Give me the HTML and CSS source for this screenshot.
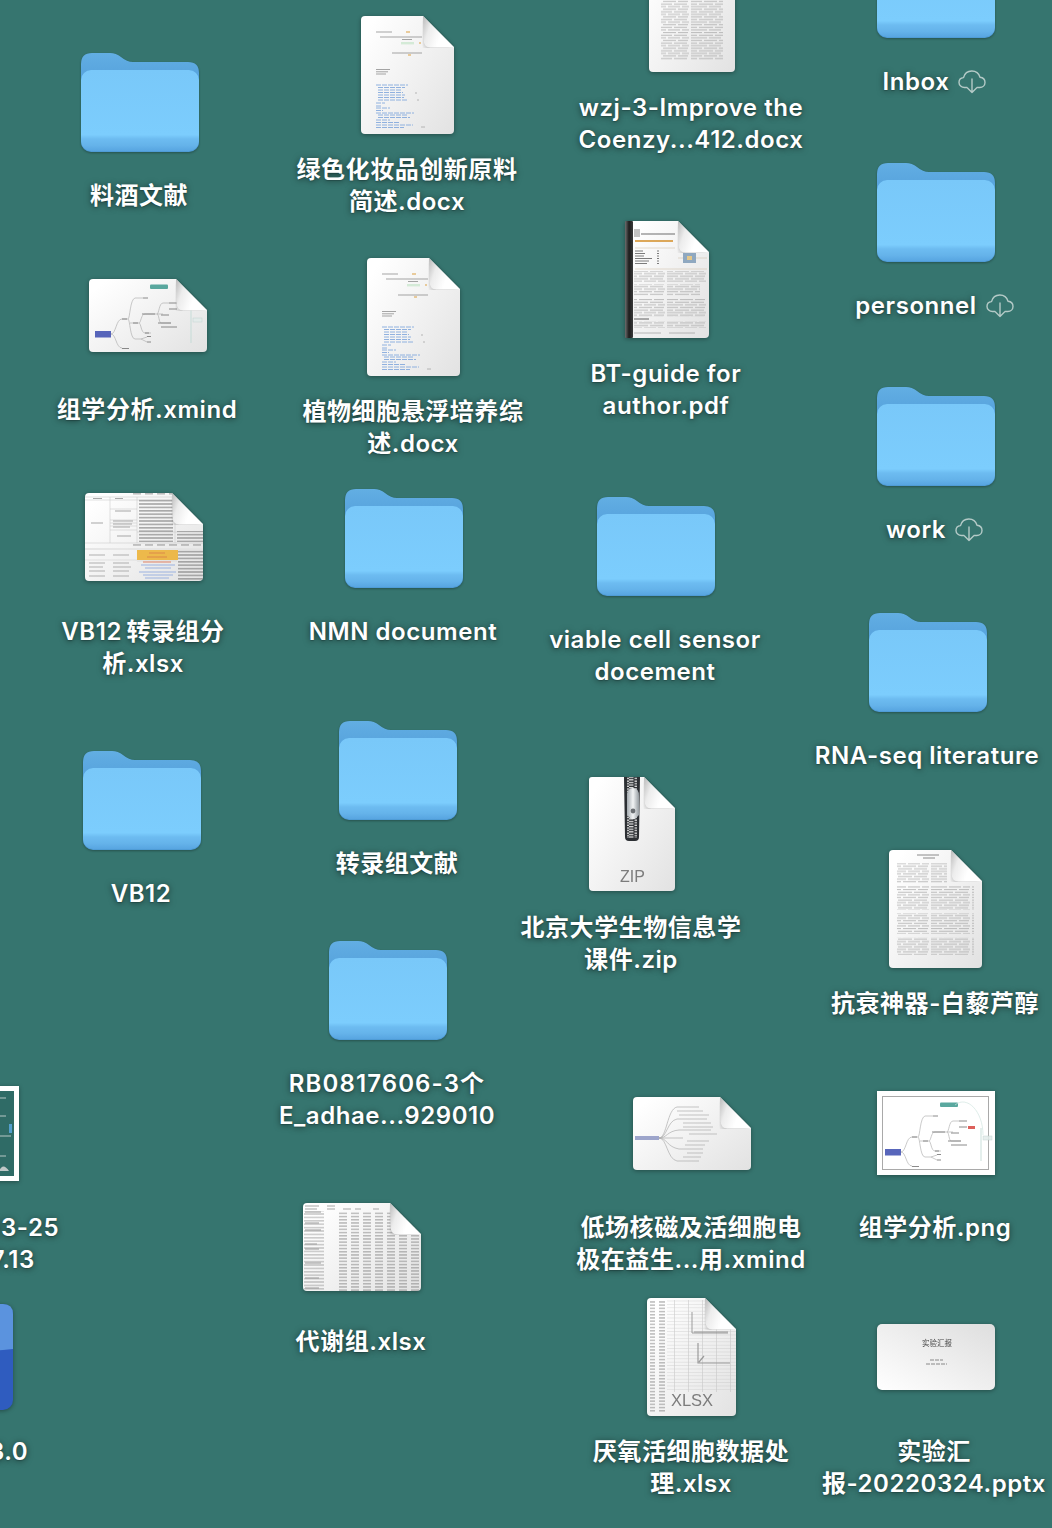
FILE: index.html
```html
<!DOCTYPE html>
<html lang="en">

<head>
    <meta charset="UTF-8">
    <title>Desktop</title>
    <link rel="stylesheet" href="styles.css">
</head>

<body>
    <!-- shared shapes -->
    <svg class="defs" width="0" height="0">
        <defs>
            <linearGradient id="folderBack" x1="0" y1="0" x2="0" y2="1">
                <stop offset="0" stop-color="#62aee3" />
                <stop offset="1" stop-color="#4793d4" />
            </linearGradient>
            <linearGradient id="folderFront" x1="0" y1="0" x2="0" y2="1">
                <stop offset="0" stop-color="#79c8f9" />
                <stop offset="0.8" stop-color="#7ccdfd" />
                <stop offset="0.85" stop-color="#6dbcf1" />
                <stop offset="0.93" stop-color="#65b3ea" />
                <stop offset="1" stop-color="#58a5e1" />
            </linearGradient>
            <linearGradient id="paper" x1="0" y1="0.2" x2="1" y2="1">
                <stop offset="0" stop-color="#ffffff" />
                <stop offset="1" stop-color="#e2e2e2" />
            </linearGradient>
            <linearGradient id="slide" x1="0" y1="1" x2="1" y2="0">
                <stop offset="0" stop-color="#ffffff" />
                <stop offset="1" stop-color="#dedede" />
            </linearGradient>
            <linearGradient id="foldFill" x1="0" y1="0" x2="1" y2="0.35">
                <stop offset="0" stop-color="#b9b9b9" />
                <stop offset="0.3" stop-color="#ececec" />
                <stop offset="0.7" stop-color="#ffffff" />
            </linearGradient>
            <linearGradient id="spine" x1="0" y1="0" x2="1" y2="0">
                <stop offset="0" stop-color="#6d6d6d" />
                <stop offset="0.5" stop-color="#1d1d1d" />
                <stop offset="1" stop-color="#3a3a3a" />
            </linearGradient>
            <linearGradient id="slider" x1="0" y1="0" x2="1" y2="0">
                <stop offset="0" stop-color="#a4abb0" />
                <stop offset="0.5" stop-color="#f2f4f5" />
                <stop offset="1" stop-color="#959ca1" />
            </linearGradient>
            <pattern id="rows" width="41" height="7.8" patternUnits="userSpaceOnUse">
                <path d="M0 0.6H12M14 0.6H27M29 0.6H39M0 3.2H7M9 3.2H23M25 3.2H38M0 5.8H17M19 5.8H31M33 5.8H40" stroke="#a0a0a0" stroke-width="0.8" fill="none" />
            </pattern>
            <pattern id="tableRows" width="118" height="3.4" patternUnits="userSpaceOnUse">
                <rect width="118" height="1.6" fill="#777" opacity="0.7" />
            </pattern>
            <pattern id="cells" width="12" height="3.2" patternUnits="userSpaceOnUse">
                <rect width="8" height="1.5" fill="#777" opacity="0.55" />
            </pattern>
            <pattern id="sheet" width="14" height="3.4" patternUnits="userSpaceOnUse">
                <path d="M0 3.2H14M13.5 0V3.4" stroke="#bcbcbc" stroke-width="0.5" fill="none" />
            </pattern>
            <pattern id="teeth" width="10" height="2.6" patternUnits="userSpaceOnUse">
                <rect width="4.5" height="1.3" fill="#dcdcdc" />
                <rect x="5.5" y="1.3" width="4.5" height="1.3" fill="#dcdcdc" />
            </pattern>
            <clipPath id="clipTable">
                <path d="M4 0H87L118 31V84a4 4 0 0 1-4 4H4a4 4 0 0 1-4-4V4a4 4 0 0 1 4-4Z" />
            </clipPath>
            <clipPath id="clipSheet">
                <path d="M4 0H58L89 31V114a4 4 0 0 1-4 4H4a4 4 0 0 1-4-4V4a4 4 0 0 1 4-4Z" />
            </clipPath>

            <symbol id="folder" viewBox="0 0 118 99">
                <path fill="url(#folderBack)" d="M0 11Q0 0 11 0H29Q35 0 40 4Q46 9 52 9H107Q118 9 118 20V60H0Z" />
                <rect y="17" width="118" height="82" rx="10" fill="#4f9cd6" />
                <rect y="17" width="118" height="81" rx="10" fill="url(#folderFront)" />
            </symbol>

            <symbol id="fold" viewBox="0 0 32 32">
                <path class="fold-shape" fill="url(#foldFill)" d="M0.5 0L31.5 31.5H8Q1.5 31.5 1 24Z" />
            </symbol>

            <symbol id="mindmap" viewBox="0 0 118 73">
                <g fill="none" stroke="#a6a6a6" stroke-width="0.7">
                    <path d="M22 55C27 55 27 40 33 40H39C41 40 41 20 46 19H54M22 55C27 55 27 69 33 69M39 40C41 40 41 60 46 60H52" />
                    <path d="M41 44H50C52 44 52 35 56 35H68C70 35 70 24 74 24H80M50 44C52 44 52 54 56 54H62M68 35H74M68 35C70 35 70 44 72 44H82M52 60L58 58M52 60L58 63" />
                </g>
                <g fill="none" stroke="#777" stroke-width="1">
                    <path d="M54 19H59M33 40H38M33 69.5H40M44 44H49M53 35H66M69 44H82M72 48H88M56 54H60M58 57.5H62M58 63H62M72 36H80M80 24H88M80 30H88" />
                </g>
                <path d="M102 31V64" stroke="#bfd9d4" stroke-width="1" />
                <rect x="61" y="5.5" width="18" height="4.5" rx="1" fill="#3e9a8f" />
                <rect x="6" y="52" width="16" height="6.5" fill="#3c4cb0" />
                <rect x="104" y="39" width="9" height="4" fill="#e2ecea" stroke="#bcd0cc" stroke-width="0.5" />
            </symbol>

            <symbol id="reportText" viewBox="0 0 93 118">
                <g fill="none" stroke="#7d7d7d" stroke-width="1" opacity="0.8">
                    <path d="M15 16H31M19 21H61M41 23.5H51M31 37H61M15 53.5H29M15 55.8H27M15 58H25" />
                </g>
                <g fill="none" stroke="#e2b469" stroke-width="1.4">
                    <path d="M45 16H49M58 27H60M47 39H50" />
                </g>
                <rect x="40" y="26" width="13" height="2.4" fill="#cfe9d2" />
                <g fill="none" stroke="#7fa6dc" stroke-width="1" stroke-dasharray="5 1">
                    <path d="M15 69H47M17 71.5H44M17 74H41M17 76.5H42M17 79H44M17 81.5H43M17 84H46M15 87H24M15 90H21M15 92H29M15 94.5H22M15 97H53M17 99H46M17 101.5H49M15 104H29M15 106.5H39M15 109H52M15 111.5H43" />
                </g>
                <path d="M54 77H56M56 84H58M60 111H64" stroke="#aaa" stroke-width="1" />
            </symbol>
        </defs>
    </svg>

    <div class="desktop">

        <!-- left column -->
        <div class="item at-liaojiu">
            <div class="icon-box"><svg class="folder"><use href="#folder" /></svg></div>
            <div class="label">料酒文献</div>
        </div>

        <div class="item at-xmind">
            <div class="icon-box">
                <svg class="icon" width="118" height="73" viewBox="0 0 118 73">
                    <path fill="url(#paper)" d="M4 0H87L118 31V69a4 4 0 0 1-4 4H4a4 4 0 0 1-4-4V4a4 4 0 0 1 4-4Z" />
                    <use class="thumb" href="#mindmap" width="118" height="73" />
                    <use href="#fold" x="86.5" width="32" height="32" />
                </svg>
            </div>
            <div class="label">组学分析.xmind</div>
        </div>

        <div class="item at-vb12x">
            <div class="icon-box">
                <svg class="icon" width="118" height="88" viewBox="0 0 118 88">
                    <g clip-path="url(#clipTable)">
                        <path fill="url(#paper)" d="M0 0H118V88H0Z" />
                        <g class="thumb">
                            <rect x="45" y="0" width="48" height="3" fill="url(#cells)" />
                            <path d="M0 4H93M25 4V50M52 4V50M90 4V50M0 50H118M0 7H90M25 16H52M25 27H52M25 30H52M25 33H52M25 37H52M52 39H118" stroke="#c4c4c4" stroke-width="0.6" fill="none" />
                            <rect x="54" y="6" width="34" height="43" fill="url(#tableRows)" />
                            <rect x="92" y="38" width="26" height="11" fill="url(#tableRows)" />
                            <path d="M30 18H46M28 28H48M28 31H47M28 34H45M32 43H46M6 30H18M8 5.5H17M30 5.5H38" stroke="#999" stroke-width="1" />
                            <rect x="45" y="51" width="73" height="3" fill="url(#cells)" />
                            <rect y="55" width="118" height="2" fill="#e3e3e3" />
                            <rect x="52" y="57" width="41" height="10" fill="#edb02e" />
                            <path d="M64 60H80M62 64H82" stroke="#d9762d" stroke-width="1" />
                            <rect x="93" y="56" width="25" height="32" fill="url(#tableRows)" />
                            <path d="M52 68H92M0 67H52" stroke="#ccc" stroke-width="0.6" />
                            <path d="M4 62H20M28 62H44M4 70H20M28 70H44M4 74H18M28 74H46M4 78H20M28 78H44M4 83H20M28 83H44" stroke="#a5a5a5" stroke-width="1" />
                            <path d="M58 69H86" stroke="#e0714f" stroke-width="1" />
                            <path d="M56 72H90M60 75H86M54 79H91M58 82H88M60 85H84" stroke="#8ea9df" stroke-width="1" />
                        </g>
                    </g>
                    <use href="#fold" x="86.5" width="32" height="32" />
                </svg>
            </div>
            <div class="label">VB12&#8201;转录组分<br>析.xlsx</div>
        </div>

        <div class="item at-vb12">
            <div class="icon-box"><svg class="folder"><use href="#folder" /></svg></div>
            <div class="label">VB12</div>
        </div>

        <!-- cut off by the left edge -->
        <div class="item at-shot">
            <div class="icon-box">
                <svg class="icon" width="116" height="95" viewBox="0 0 116 95">
                    <rect width="116" height="95" fill="#fff" />
                    <rect x="5" y="5" width="106" height="85" fill="#2f6b66" />
                    <path class="thumb" d="M96 12H103M96 30H103M94 50H108M96 70H103" stroke="#cfd8d6" stroke-width="1" />
                    <rect class="thumb" x="106" y="38" width="3" height="9" fill="#5aa9e0" />
                    <path class="thumb" d="M96 85Q100 76 106 85Z" fill="#d8d8d8" />
                </svg>
            </div>
            <div class="label">截屏2022-03-25<br>上午 10.07.13</div>
        </div>

        <div class="item at-app">
            <div class="icon-box">
                <svg class="icon" width="102" height="106" viewBox="0 0 102 106">
                    <rect width="102" height="106" rx="10" fill="#2f5cbf" />
                    <path d="M0 10Q0 0 10 0H92Q102 0 102 10V45Q50 50 0 48Z" fill="#5b93de" />
                </svg>
            </div>
            <div class="label">Setup_v3.0</div>
        </div>

        <!-- second column -->
        <div class="item at-green">
            <div class="icon-box">
                <svg class="icon icon-odd" width="93" height="118" viewBox="0 0 93 118">
                    <path fill="url(#paper)" d="M4 0H62L93 31V114a4 4 0 0 1-4 4H4a4 4 0 0 1-4-4V4a4 4 0 0 1 4-4Z" />
                    <use class="thumb" href="#reportText" width="93" height="118" />
                    <use href="#fold" x="61.5" width="32" height="32" />
                </svg>
            </div>
            <div class="label">绿色化妆品创新原料<br>简述.docx</div>
        </div>

        <div class="item at-plant">
            <div class="icon-box">
                <svg class="icon icon-odd" width="93" height="118" viewBox="0 0 93 118">
                    <path fill="url(#paper)" d="M4 0H62L93 31V114a4 4 0 0 1-4 4H4a4 4 0 0 1-4-4V4a4 4 0 0 1 4-4Z" />
                    <use class="thumb" href="#reportText" width="93" height="118" />
                    <use href="#fold" x="61.5" width="32" height="32" />
                </svg>
            </div>
            <div class="label">植物细胞悬浮培养综<br>述.docx</div>
        </div>

        <div class="item at-nmn">
            <div class="icon-box"><svg class="folder"><use href="#folder" /></svg></div>
            <div class="label">NMN document</div>
        </div>

        <div class="item at-zhuanlu">
            <div class="icon-box"><svg class="folder"><use href="#folder" /></svg></div>
            <div class="label">转录组文献</div>
        </div>

        <div class="item at-rb">
            <div class="icon-box"><svg class="folder"><use href="#folder" /></svg></div>
            <div class="label"><span class="digits-wide">RB0817606-3个</span><br>E_adhae...929010</div>
        </div>

        <div class="item at-metab">
            <div class="icon-box">
                <svg class="icon" width="118" height="88" viewBox="0 0 118 88">
                    <g clip-path="url(#clipTable)">
                        <path fill="url(#paper)" d="M0 0H118V88H0Z" />
                        <g class="thumb">
                            <path d="M2 3H16M24 3H32M2 6H14M24 6H32M40 6H48M52 6H58M70 6H76" stroke="#999" stroke-width="1" />
                            <rect x="1" y="8" width="20" height="80" fill="url(#tableRows)" opacity="0.6" />
                            <rect x="36" y="8" width="82" height="80" fill="url(#cells)" />
                            <path d="M2 9H18M2 20H16M2 27H18M2 41H14M2 46H16M2 60H18M2 75H16M2 85H16" stroke="#8a8a8a" stroke-width="1" />
                        </g>
                    </g>
                    <use href="#fold" x="86.5" width="32" height="32" />
                </svg>
            </div>
            <div class="label">代谢组.xlsx</div>
        </div>

        <!-- third column -->
        <div class="item at-wzj">
            <div class="icon-box">
                <svg class="icon" width="86" height="118" viewBox="0 0 86 118">
                    <path fill="url(#paper)" d="M4 0H55L86 31V114a4 4 0 0 1-4 4H4a4 4 0 0 1-4-4V4a4 4 0 0 1 4-4Z" />
                    <rect class="thumb" x="12" y="34" width="62" height="72" fill="url(#rows)" />
                    <use href="#fold" x="54.5" width="32" height="32" />
                </svg>
            </div>
            <div class="label">wzj-3-Improve the<br>Coenzy...412.docx</div>
        </div>

        <div class="item at-bt">
            <div class="icon-box">
                <svg class="icon" width="84" height="117" viewBox="0 0 84 117">
                    <path fill="url(#paper)" d="M4 0H53L84 31V113a4 4 0 0 1-4 4H4a4 4 0 0 1-4-4V4a4 4 0 0 1 4-4Z" />
                    <rect width="8" height="117" rx="1" fill="url(#spine)" />
                    <g class="thumb">
                        <rect x="9" y="8" width="6" height="8" fill="#b9b9b9" />
                        <path d="M16 13H50" stroke="#555" stroke-width="1.2" />
                        <path d="M10 20H48" stroke="#d89a3e" stroke-width="2" />
                        <path d="M10 27H50M53 37H82M10 48H82" stroke="#c9b9a2" stroke-width="0.6" />
                        <path d="M10 30H18M10 32.5H20M10 35H19M10 37.5H27M10 40H24M10 42.5H22M32 30H34M32 32.5H34M32 35H34M32 37.5H34M32 40H34M32 42.5H34" stroke="#555" stroke-width="0.9" />
                        <rect x="58" y="32" width="13" height="10" fill="#7f9cb8" />
                        <rect x="62" y="35" width="5" height="4" fill="#e2c179" />
                        <rect x="9" y="50" width="73" height="11" fill="url(#rows)" />
                        <rect x="9" y="63" width="66" height="12" fill="url(#rows)" />
                        <rect x="9" y="77" width="73" height="19" fill="url(#rows)" />
                        <path d="M9 98H24" stroke="#444" stroke-width="1" />
                        <rect x="9" y="100" width="73" height="7" fill="url(#rows)" />
                        <path d="M9 112H36M44 112H70" stroke="#9a9a9a" stroke-width="0.8" />
                    </g>
                    <use href="#fold" x="52.5" width="32" height="32" />
                </svg>
            </div>
            <div class="label">BT-guide for<br>author.pdf</div>
        </div>

        <div class="item at-viable">
            <div class="icon-box"><svg class="folder"><use href="#folder" /></svg></div>
            <div class="label">viable cell sensor<br>docement</div>
        </div>

        <div class="item at-zip">
            <div class="icon-box">
                <svg class="icon" width="86" height="118" viewBox="0 0 86 118">
                    <path fill="url(#paper)" d="M3 3H55L86 34V113a4 4 0 0 1-4 4H4a4 4 0 0 1-4-4V6a3 3 0 0 1 3-3Z" />
                    <path d="M35 3H51L50 63a4 4 0 0 1-4 4H40a4 4 0 0 1-4-4Z" fill="#2c2f33" />
                    <rect x="38" y="3" width="10" height="61" fill="url(#teeth)" />
                    <path d="M38 22Q38 14 44 14Q50 14 50 22V41L46 45H42L38 41Z" fill="url(#slider)" />
                    <circle cx="44" cy="37" r="2.4" fill="#6a6e72" />
                    <use href="#fold" x="54.5" y="3" width="32" height="32" />
                    <text class="type-tag" x="43.5" y="108" font-size="16">ZIP</text>
                </svg>
            </div>
            <div class="label">北京大学生物信息学<br>课件.zip</div>
        </div>

        <div class="item at-lowfield">
            <div class="icon-box">
                <svg class="icon" width="118" height="73" viewBox="0 0 118 73">
                    <path fill="url(#paper)" d="M4 0H87L118 31V69a4 4 0 0 1-4 4H4a4 4 0 0 1-4-4V4a4 4 0 0 1 4-4Z" />
                    <g class="thumb">
                        <rect x="2" y="39" width="24" height="4" fill="#8e97c4" />
                        <g fill="none" stroke="#a2a2a2" stroke-width="0.7">
                            <path d="M26 41C34 41 34 12 44 10H66M26 41C34 41 34 24 44 22H74M26 41C34 41 34 34 46 33H78M26 41H50M26 41C34 41 34 50 46 52H70M26 41C34 41 34 62 44 64H66" />
                            <path d="M44 14H70M46 18H76M50 26H78M50 30H80M56 37H84M54 44H76M52 48H72M54 56H70M50 60H68" />
                        </g>
                    </g>
                    <use href="#fold" x="86.5" width="32" height="32" />
                </svg>
            </div>
            <div class="label">低场核磁及活细胞电<br>极在益生...用.xmind</div>
        </div>

        <div class="item at-anaer">
            <div class="icon-box">
                <svg class="icon icon-odd" width="89" height="118" viewBox="0 0 89 118">
                    <g clip-path="url(#clipSheet)">
                        <path fill="url(#paper)" d="M0 0H89V118H0Z" />
                        <g class="thumb">
                            <rect x="20" y="2" width="69" height="92" fill="url(#sheet)" />
                            <rect x="3" y="2" width="15" height="113" fill="url(#cells)" />
                        </g>
                    </g>
                    <path class="thumb" d="M45 14V35H81M47 34H81" stroke="#8d8d8d" stroke-width="1" fill="none" />
                    <path class="thumb" d="M51 45V65H83M52 64L57 58" stroke="#8d8d8d" stroke-width="1.2" fill="none" />
                    <use href="#fold" x="57.5" width="32" height="32" />
                    <text class="type-tag" x="45" y="108" font-size="16.5">XLSX</text>
                </svg>
            </div>
            <div class="label">厌氧活细胞数据处<br>理.xlsx</div>
        </div>

        <!-- right column -->
        <div class="item at-inbox">
            <div class="icon-box"><svg class="folder"><use href="#folder" /></svg></div>
            <div class="label label-cloud">Inbox
                <svg class="cloud" width="28" height="24" viewBox="0 0 28 24"><path d="M9 17.5H6.5C3.5 17.5 1 15.3 1 12.5C1 9.8 3 7.8 5.5 7.6C6.5 3.8 9.7 1 13.8 1C17.8 1 21 3.7 22 7.3C24.9 7.6 27 9.8 27 12.6C27 15.4 24.7 17.5 21.8 17.5H19M14 9V22.5M9.5 18L14 22.5L18.5 18" /></svg>
            </div>
        </div>

        <div class="item at-personnel">
            <div class="icon-box"><svg class="folder"><use href="#folder" /></svg></div>
            <div class="label label-cloud">personnel
                <svg class="cloud" width="28" height="24" viewBox="0 0 28 24"><path d="M9 17.5H6.5C3.5 17.5 1 15.3 1 12.5C1 9.8 3 7.8 5.5 7.6C6.5 3.8 9.7 1 13.8 1C17.8 1 21 3.7 22 7.3C24.9 7.6 27 9.8 27 12.6C27 15.4 24.7 17.5 21.8 17.5H19M14 9V22.5M9.5 18L14 22.5L18.5 18" /></svg>
            </div>
        </div>

        <div class="item at-work">
            <div class="icon-box"><svg class="folder"><use href="#folder" /></svg></div>
            <div class="label label-cloud">work
                <svg class="cloud" width="28" height="24" viewBox="0 0 28 24"><path d="M9 17.5H6.5C3.5 17.5 1 15.3 1 12.5C1 9.8 3 7.8 5.5 7.6C6.5 3.8 9.7 1 13.8 1C17.8 1 21 3.7 22 7.3C24.9 7.6 27 9.8 27 12.6C27 15.4 24.7 17.5 21.8 17.5H19M14 9V22.5M9.5 18L14 22.5L18.5 18" /></svg>
            </div>
        </div>

        <div class="item at-rna">
            <div class="icon-box"><svg class="folder"><use href="#folder" /></svg></div>
            <div class="label">RNA-seq literature</div>
        </div>

        <div class="item at-kangshuai">
            <div class="icon-box">
                <svg class="icon icon-odd" width="93" height="118" viewBox="0 0 93 118">
                    <path fill="url(#paper)" d="M4 0H62L93 31V114a4 4 0 0 1-4 4H4a4 4 0 0 1-4-4V4a4 4 0 0 1 4-4Z" />
                    <g class="thumb">
                        <path d="M28 5H50M34 8H46" stroke="#777" stroke-width="1" />
                        <rect x="8" y="13" width="50" height="20" fill="url(#rows)" />
                        <rect x="8" y="36" width="77" height="24" fill="url(#rows)" />
                        <rect x="8" y="63" width="77" height="21" fill="url(#rows)" />
                        <rect x="8" y="87" width="77" height="18" fill="url(#rows)" />
                    </g>
                    <use href="#fold" x="61.5" width="32" height="32" />
                </svg>
            </div>
            <div class="label">抗衰神器-白藜芦醇</div>
        </div>

        <div class="item at-png">
            <div class="icon-box">
                <svg class="icon" width="118" height="84" viewBox="0 0 118 84">
                    <rect width="118" height="84" fill="#fff" />
                    <rect x="5.5" y="5.5" width="106" height="73" fill="none" stroke="#a9a9a9" stroke-width="1" />
                    <use class="thumb" href="#mindmap" x="2" y="6" width="118" height="73" />
                    <path class="thumb" d="M78 14C90 4 106 20 106 44" fill="none" stroke="#cfe5e0" stroke-width="0.8" />
                    <rect class="thumb" x="91" y="35" width="7" height="3" fill="#d8453f" />
                </svg>
            </div>
            <div class="label">组学分析.png</div>
        </div>

        <div class="item at-pptx">
            <div class="icon-box">
                <svg class="icon" width="118" height="66" viewBox="0 0 118 66">
                    <rect width="118" height="66" rx="5" fill="url(#slide)" />
                    <text class="slide-title" x="60" y="22">实验汇报</text>
                    <path class="thumb" d="M53 36H66M49 40H70" stroke="#777" stroke-width="1" stroke-dasharray="4 1" />
                </svg>
            </div>
            <div class="label label-pptx">实验汇<br>报-20220324.pptx</div>
        </div>

    </div>
</body>

</html>
```

FILE: styles.css
```css
* {
    padding: 0;
    margin: 0;
    box-sizing: border-box;
}

html,
body {
    width: 100%;
    height: 1528px;
    overflow: hidden;
}

.defs {
    position: absolute;
}

/* the desktop is a free canvas, each item sits where it was dropped */
.desktop {
    position: relative;
    width: 1052px;
    height: 1528px;
    overflow: hidden;
    background-color: #36756f;
    font-family: "Inter", "Noto Sans CJK SC", sans-serif;
}

.item {
    position: absolute;
    width: 240px;
    display: flex;
    flex-direction: column;
    align-items: center;
    gap: 20px;
}

.icon-box {
    width: 240px;
    height: 118px;
    display: flex;
    align-items: center;
    justify-content: center;
}

.label {
    padding-right: 2px;
    width: 240px;
    font-size: 24px;
    font-weight: 600;
    letter-spacing: 0.55px;
    line-height: 32px;
    text-align: center;
    white-space: nowrap;
    color: #fff;
    text-shadow: 0 1px 6px rgba(0, 0, 0, 0.55), 0 1px 1px rgba(0, 0, 0, 0.2);
}

.digits-wide {
    letter-spacing: 1.1px;
}

.label-pptx {
    padding-right: 4px;
}

.label-cloud {
    display: flex;
    align-items: center;
    justify-content: center;
    gap: 9px;
    padding-right: 3px;
}

.cloud {
    fill: none;
    stroke: #b4cac7;
    stroke-width: 1.4;
    stroke-linecap: round;
    stroke-linejoin: round;
}

.folder {
    width: 118px;
    height: 99px;
    margin-top: 3px;
    filter: drop-shadow(0 1px 1px rgba(0, 0, 0, 0.3));
}

.icon {
    filter: drop-shadow(0 1px 2px rgba(0, 0, 0, 0.35));
}

/* small page previews are soft in the original */
.thumb {
    filter: blur(0.45px);
    opacity: 0.85;
}

.icon-odd {
    margin-right: 1px;
}

.fold-shape {
    filter: drop-shadow(0 2px 2px rgba(0, 0, 0, 0.2));
}

.type-tag {
    font-family: "Liberation Sans", sans-serif;
    fill: #7c7c7c;
    text-anchor: middle;
}

.slide-title {
    font-family: "Noto Sans CJK SC", serif;
    font-size: 7.5px;
    fill: #444;
    text-anchor: middle;
}

/* positions */
.at-liaojiu { left: 20px; top: 42px; }
.at-xmind { left: 28px; top: 256px; }
.at-vb12x { left: 24px; top: 478px; }
.at-vb12 { left: 22px; top: 740px; }
.at-shot { left: -159px; top: 1074px; }
.at-app { left: -158px; top: 1298px; }

.at-green { left: 288px; top: 16px; }
.at-plant { left: 294px; top: 258px; }
.at-nmn { left: 284px; top: 478px; }
.at-zhuanlu { left: 278px; top: 710px; }
.at-rb { left: 268px; top: 930px; }
.at-metab { left: 242px; top: 1188px; }

.at-wzj { left: 572px; top: -46px; }
.at-bt { left: 547px; top: 220px; }
.at-viable { left: 536px; top: 486px; }
.at-zip { left: 512px; top: 774px; }
.at-lowfield { left: 572px; top: 1074px; }
.at-anaer { left: 572px; top: 1298px; }

.at-inbox { left: 816px; top: -72px; }
.at-personnel { left: 816px; top: 152px; }
.at-work { left: 816px; top: 376px; }
.at-rna { left: 808px; top: 602px; }
.at-kangshuai { left: 816px; top: 850px; }
.at-png { left: 816px; top: 1074px; }
.at-pptx { left: 816px; top: 1298px; }
```
